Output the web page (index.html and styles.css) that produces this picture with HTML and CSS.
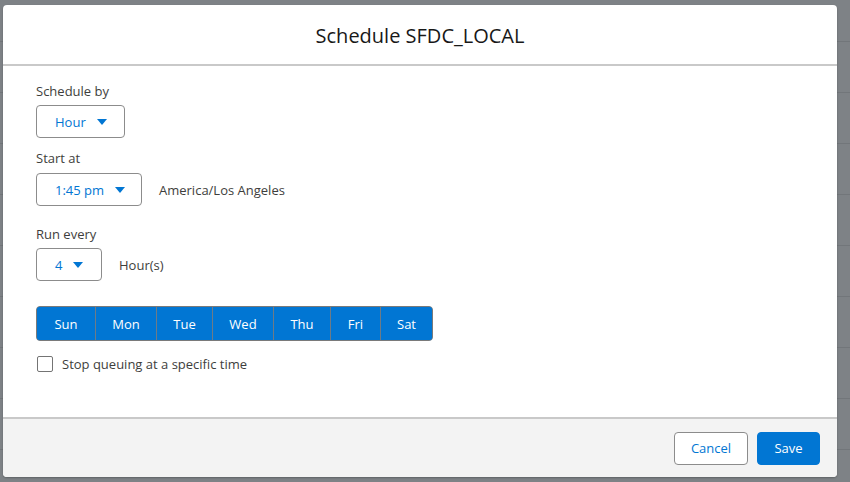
FILE: index.html
```html
<!DOCTYPE html>
<html lang="en">
<head>
<meta charset="utf-8">
<title>Schedule SFDC_LOCAL</title>
<link rel="stylesheet" href="styles.css">
</head>
<body>
<div class="backdrop">
  <div class="modal">
    <header class="modal-header">
      <h2 class="title">Schedule SFDC_LOCAL</h2>
    </header>
    <section class="modal-body">
      <div class="field f1">
        <div class="label">Schedule by</div>
        <div class="row">
          <button class="select s-hour"><span>Hour</span><svg class="caret" viewBox="0 0 10 6"><path d="M0 0H10L5 6Z"/></svg></button>
        </div>
      </div>
      <div class="field f2">
        <div class="label">Start at</div>
        <div class="row">
          <button class="select s-time"><span>1:45 pm</span><svg class="caret" viewBox="0 0 10 6"><path d="M0 0H10L5 6Z"/></svg></button>
          <span class="aside">America/Los Angeles</span>
        </div>
      </div>
      <div class="field f3">
        <div class="label">Run every</div>
        <div class="row">
          <button class="select s-num"><span>4</span><svg class="caret" viewBox="0 0 10 6"><path d="M0 0H10L5 6Z"/></svg></button>
          <span class="aside">Hour(s)</span>
        </div>
      </div>
      <div class="days">
        <button class="day d-sun">Sun</button>
        <button class="day d-mon">Mon</button>
        <button class="day d-tue">Tue</button>
        <button class="day d-wed">Wed</button>
        <button class="day d-thu">Thu</button>
        <button class="day d-fri">Fri</button>
        <button class="day d-sat">Sat</button>
      </div>
      <label class="check">
        <span class="box"></span>
        <span>Stop queuing at a specific time</span>
      </label>
    </section>
    <footer class="modal-footer">
      <button class="btn btn-neutral">Cancel</button>
      <button class="btn btn-brand">Save</button>
    </footer>
  </div>
</div>
</body>
</html>
```
FILE: styles.css
```css
html, body {
  margin: 0;
  padding: 0;
}
body {
  width: 850px;
  height: 482px;
  overflow: hidden;
  background-color: #7e8286;
  background-image: repeating-linear-gradient(to bottom, transparent 0, transparent 41px, #72767a 41px, #72767a 42px, transparent 42px, transparent 51px);
  font-family: "Open Sans", "Noto Sans", sans-serif;
  color: #3e3e3c;
}
.backdrop {
  padding: 5px 13px 5px 3px;
}
.modal {
  width: 834px;
  height: 472px;
  background: #fff;
  border-radius: 4px;
  display: flex;
  flex-direction: column;
  overflow: hidden;
  box-shadow: 0 1px 2px rgba(0,0,0,0.25);
}
.modal-header {
  height: 59px;
  flex: none;
  border-bottom: 2px solid #c9c9c9;
  display: flex;
  align-items: center;
  justify-content: center;
}
.title {
  margin: 0;
  font-weight: 400;
  font-size: 20px;
  color: #181818;
  padding-top: 2px;
}
.modal-body {
  flex: 1;
  padding: 16px 33px 0;
  font-size: 13px;
}
.label {
  line-height: 18px;
  height: 18px;
  margin-bottom: 5px;
  color: #3e3e3c;
}
.row {
  display: flex;
  align-items: center;
  gap: 17px;
}
.f2 { margin-top: 11px; }
.f2 .label { margin-bottom: 6px; }
.f3 { margin-top: 19px; }
.select {
  height: 33px;
  box-sizing: border-box;
  border: 1px solid #8c8c8c;
  border-radius: 4px;
  background: #fff;
  display: flex;
  align-items: center;
  gap: 11px;
  padding: 0 0 0 18px;
  font-family: inherit;
  font-size: 13px;
  color: #0176d3;
  white-space: nowrap;
  cursor: pointer;
}
.s-hour { width: 89px; }
.s-time { width: 106px; }
.s-num { width: 66px; }
.caret {
  width: 10px;
  height: 6px;
  fill: #0176d3;
  flex: none;
}
.aside { color: #3e3e3c; }
.days {
  margin-top: 25px;
  display: flex;
  width: 397px;
  height: 35px;
  box-sizing: border-box;
  border: 1px solid #7a7a7a;
  border-radius: 4px;
  overflow: hidden;
  background: #0176d3;
}
.day {
  border: 0;
  border-left: 1px solid #6e7b86;
  background: #0176d3;
  color: #fff;
  font-family: inherit;
  font-size: 13px;
  padding: 0;
  height: 100%;
  cursor: pointer;
}
.day:first-child { border-left: 0; }
.d-sun { width: 58px; }
.d-mon { width: 61px; }
.d-tue { width: 56px; }
.d-wed { width: 61px; }
.d-thu { width: 57px; }
.d-fri { width: 50px; }
.d-sat { width: 52px; }
.check {
  margin-top: 14px;
  display: flex;
  align-items: center;
  gap: 9px;
  font-size: 13px;
  color: #3e3e3c;
  padding-left: 1px;
}
.box {
  width: 16px;
  height: 16px;
  box-sizing: border-box;
  border: 1px solid #747474;
  border-radius: 2px;
  background: #fff;
}
.modal-footer {
  height: 58px;
  flex: none;
  border-top: 2px solid #c9c9c9;
  background: #f3f3f3;
  display: flex;
  align-items: center;
  justify-content: flex-end;
  gap: 9px;
  padding: 0 17px 0 0;
}
.btn {
  height: 33px;
  box-sizing: border-box;
  border-radius: 4px;
  font-family: inherit;
  font-size: 13px;
  padding: 0;
  cursor: pointer;
}
.btn-neutral {
  width: 74px;
  background: #fff;
  border: 1px solid #8c8c8c;
  color: #0176d3;
}
.btn-brand {
  width: 63px;
  background: #0176d3;
  border: 1px solid #0176d3;
  color: #fff;
}
```
